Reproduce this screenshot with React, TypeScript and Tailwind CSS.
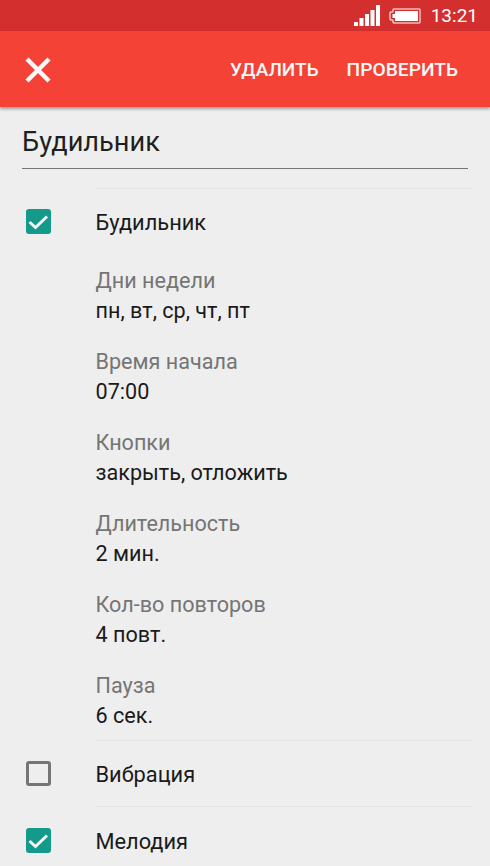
const settings = [
  { label: "Дни недели", value: "пн, вт, ср, чт, пт" },
  { label: "Время начала", value: "07:00" },
  { label: "Кнопки", value: "закрыть, отложить" },
  { label: "Длительность", value: "2 мин." },
  { label: "Кол-во повторов", value: "4 повт." },
  { label: "Пауза", value: "6 сек." },
];

function Checkbox({ checked }: { checked: boolean }) {
  if (!checked) {
    return <div className="size-[25px] rounded-[3px] border-[3px] border-[#757575]" />;
  }
  return (
    <div className="size-[25px] rounded-[3px] bg-[#139a8a]">
      <svg width="25" height="25" viewBox="0 0 25 25" fill="none">
        <path d="M3.5 13 L9.5 18.5 L21 7.5" stroke="#f5f5f5" strokeWidth="3" />
      </svg>
    </div>
  );
}

function StatusBar() {
  return (
    <div className="flex h-[31px] items-center justify-end bg-[#d32f2f] pr-[12px] text-white">
      <svg width="26" height="21" viewBox="0 0 26 21" className="mb-[1px]" fill="#fff">
        <rect x="0" y="17" width="4" height="4" />
        <rect x="5.5" y="13" width="4" height="8" />
        <rect x="11" y="9" width="4" height="12" />
        <rect x="16.5" y="5" width="4" height="16" />
        <rect x="22" y="0" width="4" height="21" />
      </svg>
      <svg width="32" height="18" viewBox="0 0 32 18" className="ml-[9px]" fill="none">
        <path d="M3 5 H4 V2 H31 V16 H4 V13 H1 V5 Z" stroke="#fff" strokeWidth="1" />
        <path d="M6 4 H29 V14 H6 V11 H3.5 V7 H6 Z" fill="#fff" />
      </svg>
      <span className="ml-[10px] text-[19px] leading-none">13:21</span>
    </div>
  );
}

function Toolbar() {
  return (
    <div className="relative z-10 flex h-[76px] items-center justify-between bg-[#f44336] pl-[25px] pr-[32px] shadow-[0_2px_3px_rgba(0,0,0,0.35)]">
      <svg width="26" height="26" viewBox="0 0 26 26" fill="none" className="mt-px">
        <path d="M2 2 L24 24 M24 2 L2 24" stroke="#fafafa" strokeWidth="4.4" />
      </svg>
      <div className="mt-[3px] flex gap-[28px] font-medium text-[#fafafa]">
        <span className="text-[19px]">УДАЛИТЬ</span>
        <span className="text-[19.2px]">ПРОВЕРИТЬ</span>
      </div>
    </div>
  );
}

function CheckRow({ label, checked }: { label: string; checked: boolean }) {
  return (
    <div className="flex h-[65px] items-center">
      <div className="ml-[26px] w-[69.5px]">
        <Checkbox checked={checked} />
      </div>
      <span className="mt-[3px] text-[21.8px] text-[#1a1a1a]">{label}</span>
    </div>
  );
}

export default function App() {
  return (
    <div className="h-[866px] w-[490px] overflow-hidden bg-[#eeeeee] font-['Roboto',sans-serif]">
      <StatusBar />
      <Toolbar />
      <div className="mx-[22px] flex h-[62px] items-end border-b border-[#757575] pb-[8px]">
        <span className="text-[27.2px] leading-[36px] text-[#1f1f1f]">Будильник</span>
      </div>
      <div className="ml-[96px] mr-[18px] mt-[19px] h-px bg-[#e2e2e2]" />
      <CheckRow label="Будильник" checked />
      <div className="ml-[95.5px]">
        {settings.map((s) => (
          <div key={s.label} className="flex h-[81px] flex-col justify-center pt-[2px]">
            <span className="text-[21.6px] leading-[30px] text-[#757575]">{s.label}</span>
            <span className="text-[21.6px] leading-[30px] text-[#1a1a1a]">{s.value}</span>
          </div>
        ))}
      </div>
      <div className="ml-[96px] mr-[18px] h-px bg-[#e2e2e2]" />
      <CheckRow label="Вибрация" checked={false} />
      <div className="mb-px ml-[96px] mr-[18px] h-px bg-[#e2e2e2]" />
      <CheckRow label="Мелодия" checked />
    </div>
  );
}
